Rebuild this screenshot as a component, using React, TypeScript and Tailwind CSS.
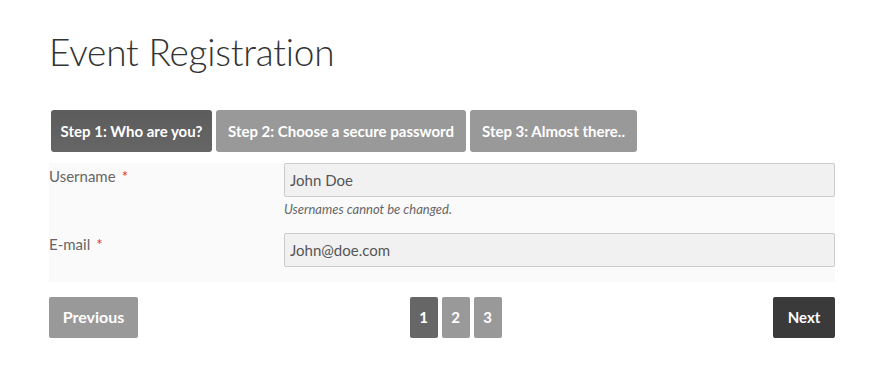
import React from 'react';

const steps = [
  { label: 'Step 1: Who are you?', w: 'w-[161px]' },
  { label: 'Step 2: Choose a secure password', w: 'w-[250px]' },
  { label: 'Step 3: Almost there..', w: 'w-[167px]' },
];

const App: React.FC = () => {
  return (
    <div className="min-h-[374px] bg-white px-[49px] pt-[27px] font-['Lato',sans-serif] text-[#666]">
      <h1 className="text-[37px] font-light leading-[50px] text-[#333] tracking-[-0.2px]">Event Registration</h1>

      <div className="mt-[33px] flex gap-1 pl-[2px]">
        {steps.map((s, i) => (
          <div
            key={s.label}
            className={
              'flex h-[42px] items-center justify-center rounded-[3px] text-[15px] font-bold text-white ' +
              s.w +
              ' ' +
              (i === 0 ? 'bg-gradient-to-b from-[#5c5c5c] to-[#666]' : 'bg-[#999]')
            }
          >
            {s.label}
          </div>
        ))}
      </div>

      <div className="mt-[11px] w-[786px] bg-[#fafafa] pb-[15px]">
        <div className="flex">
          <label className="w-[235px] pt-[2px] text-[15px] text-[#666]">
            Username<span className="ml-[6px] text-[#d33]">*</span>
          </label>
          <div className="flex-1">
            <input
              readOnly
              value="John Doe"
              className="h-[34px] w-full rounded-[2px] border border-[#ccc] bg-[#f1f1f2] px-[5px] text-[15px] text-[#555] outline-none"
            />
            <p className="mt-[3px] text-[13px] italic text-[#666]">Usernames cannot be changed.</p>
          </div>
        </div>
        <div className="mt-[13px] flex">
          <label className="w-[235px] text-[15px] text-[#666]">
            E-mail<span className="ml-[6px] text-[#d33]">*</span>
          </label>
          <div className="flex-1">
            <input
              readOnly
              value="John@doe.com"
              className="h-[34px] w-full rounded-[2px] border border-[#ccc] bg-[#f1f1f2] px-[5px] text-[15px] text-[#555] outline-none"
            />
          </div>
        </div>
      </div>

      <div className="mt-[15px] flex w-[786px] items-center justify-between">
        <button className="h-[41px] w-[89px] rounded-[2px] bg-[#999] text-[16px] font-bold text-white">Previous</button>
        <div className="flex gap-1">
          <span className="flex h-[41px] w-[28px] items-center justify-center rounded-[2px] bg-[#666] text-[15px] font-bold text-white">1</span>
          <span className="flex h-[41px] w-[28px] items-center justify-center rounded-[2px] bg-[#999] text-[15px] font-bold text-white">2</span>
          <span className="flex h-[41px] w-[28px] items-center justify-center rounded-[2px] bg-[#999] text-[15px] font-bold text-white">3</span>
        </div>
        <button className="h-[41px] w-[62px] rounded-[2px] bg-[#3a3a3a] text-[15px] font-bold text-white">Next</button>
      </div>
    </div>
  );
};

export default App;
